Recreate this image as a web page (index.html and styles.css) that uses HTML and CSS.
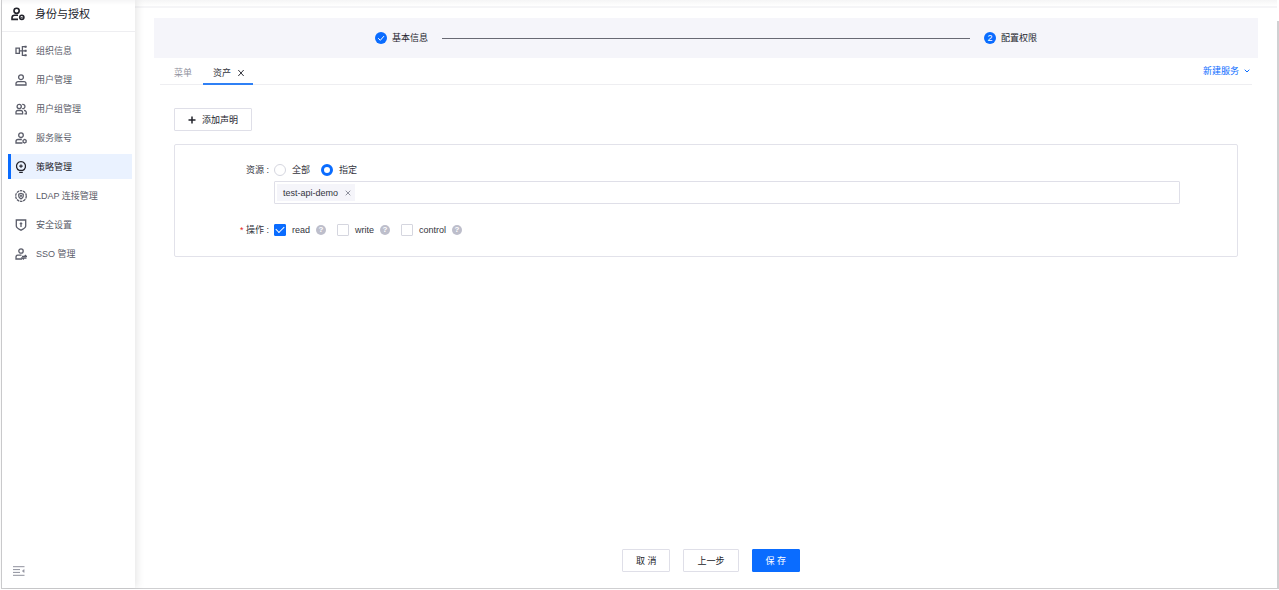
FILE: index.html
```html
<!DOCTYPE html>
<html lang="zh-CN">
<head>
<meta charset="utf-8">
<title>身份与授权</title>
<link rel="stylesheet" href="styles.css">
</head>
<body>
<div class="app">
  <aside class="sidebar">
    <h1 class="sidebar-title">
      <svg class="title-icon" viewBox="0 0 14 14"><circle cx="5.600" cy="3.800" r="2.600"/><path d="M7 8.200H3.600A2.600 2.600 0 0 0 1 10.800v1.600h6"/><circle cx="10.800" cy="10.300" r="2.100"/><path d="M9.800 10.200l.8.8 1.400-1.500" stroke-width="1"/></svg>
      身份与授权
    </h1>
    <nav class="menu">
      <a class="menu-item" href="#"><svg class="icon" viewBox="0 0 12 12"><path d="M1 3.200h3.400v5.200H1zM4.400 5.800h3M11.500 1.700H7.400v8.600h4.100M7.400 5.800h4.100"/><path d="M9.600 1.700h1.900M9.600 5.800h1.900M9.600 10.300h1.900" stroke-width="2"/></svg>组织信息</a>
      <a class="menu-item" href="#"><svg class="icon" viewBox="0 0 12 12"><circle cx="6" cy="3.200" r="2.400"/><path d="M1 11V9.600a2 2 0 0 1 2-2h6a2 2 0 0 1 2 2V11z"/></svg>用户管理</a>
      <a class="menu-item" href="#"><svg class="icon" viewBox="0 0 12 12"><circle cx="4.200" cy="3.500" r="2.100"/><path d="M7.200 1.500a2.100 2.100 0 1 1 0 4M1 10.800V9.200a1.700 1.700 0 0 1 1.700-1.700h3.200a1.700 1.700 0 0 1 1.700 1.700v1.600zM9 7.500a2 2 0 0 1 2.300 2v1.300H9.500"/></svg>用户组管理</a>
      <a class="menu-item" href="#"><svg class="icon" viewBox="0 0 12 12"><circle cx="6" cy="3.200" r="2.300"/><path d="M6.800 7.500H3a2 2 0 0 0-2 2V11h6.400"/><path d="M9.600 7.400l1.500.9v1.900l-1.500.9-1.500-.9V8.300z"/></svg>服务账号</a>
      <a class="menu-item active" href="#" aria-current="page"><svg class="icon" viewBox="0 0 12 12"><path d="M4.200 9.300a4.500 4.500 0 1 1 3.600 0zM4.200 11.300h3.600"/><path d="M6 3.200l.6 1.300 1.400.6-1.400.6L6 7l-.6-1.300L4 5.100l1.400-.6z" fill="currentColor" stroke-width=".3"/></svg>策略管理</a>
      <a class="menu-item" href="#"><svg class="icon" viewBox="0 0 12 12"><circle cx="6" cy="6" r="5.300" stroke-dasharray="2.600 .7"/><path d="M3.800 4.200L6 3.400l2.200.8v2.100C8.200 7.500 7.100 8.300 6 8.800 4.900 8.300 3.800 7.500 3.800 6.300z"/><circle cx="6" cy="5.900" r=".4"/></svg>LDAP 连接管理</a>
      <a class="menu-item" href="#"><svg class="icon" viewBox="0 0 12 12"><path d="M1.300 1h9.400v6c0 2-2.200 3-4.700 4.200C3.500 10 1.300 9 1.300 7zM6 8V4.500"/><path d="M4.700 5h2.600L6 3.200z" fill="currentColor" stroke-width=".4"/></svg>安全设置</a>
      <a class="menu-item" href="#"><svg class="icon" viewBox="0 0 12 12"><circle cx="6" cy="3" r="2.200"/><path d="M6.500 7.200H3a2 2 0 0 0-2 2V11h6M7 8.400h4.500L9.800 6.900M11.500 10H7.300l1.500 1.400"/></svg>SSO 管理</a>
    </nav>
    <button class="collapse" type="button" aria-label="收起菜单"><svg viewBox="0 0 12 10"><path d="M0 .700h11.500M0 3.600h7M0 6.400h7M0 9.300h11.500"/><path d="M11.200 3.400v3.200L9.200 5z" fill="currentColor" stroke-width=".4"/></svg></button>
  </aside>

  <main class="content">
    <div class="topline"></div>
    <div class="page">
      <ol class="steps">
        <li class="step"><span class="step-dot"><svg viewBox="0 0 12 12"><path d="M3.200 6.200l2.100 2.100 3.700-4.200"/></svg></span>基本信息</li>
        <li class="step-line" role="presentation"></li>
        <li class="step"><span class="step-dot">2</span>配置权限</li>
      </ol>

      <div class="tabs">
        <a class="tab" href="#">菜单</a>
        <a class="tab selected" href="#">资产<svg class="tab-close" viewBox="0 0 8 8"><path d="M1.300 1l5.400 6M6.700 1L1.300 7"/></svg></a>
        <button class="new-service" type="button">新建服务<svg viewBox="0 0 6 6"><path d="M.700 1.700L3 4l2.300-2.300"/></svg></button>
      </div>

      <div class="body">
        <button class="btn add" type="button"><svg viewBox="0 0 8 8"><path d="M4 .500v7M.500 4h7"/></svg>添加声明</button>

        <form class="card">
          <div class="row">
            <span class="label" id="res">资源</span>
            <div class="field" role="radiogroup" aria-labelledby="res">
              <div class="options">
                <label class="option"><input class="radio" type="radio" name="scope">全部</label>
                <label class="option"><input class="radio" type="radio" name="scope" checked>指定</label>
              </div>
              <div class="tag-box">
                <span class="tag">test-api-demo<button class="tag-close" type="button" aria-label="移除"><svg viewBox="0 0 6 6"><path d="M.700.700l4.600 4.600M5.300.700L.700 5.300"/></svg></button></span>
                <input class="tag-input" type="text" aria-label="资源">
              </div>
            </div>
          </div>
          <div class="row">
            <span class="label required" id="ops">操作</span>
            <div class="options checks" role="group" aria-labelledby="ops">
              <span class="check-item"><label class="option"><input class="check" type="checkbox" checked>read</label><span class="help">?</span></span>
              <span class="check-item"><label class="option"><input class="check" type="checkbox">write</label><span class="help">?</span></span>
              <span class="check-item"><label class="option"><input class="check" type="checkbox">control</label><span class="help">?</span></span>
            </div>
          </div>
        </form>
      </div>

      <footer class="actions">
        <button class="btn" type="button">取 消</button>
        <button class="btn" type="button">上一步</button>
        <button class="btn primary" type="button">保 存</button>
      </footer>
    </div>
  </main>
  <div class="scrollbar"></div>
</div>
</body>
</html>
```
FILE: styles.css
```css
* {
  box-sizing: border-box;
}

body {
  margin: 0;
  color: #33343d;
  font: 9px/14px "Liberation Sans", "Noto Sans CJK SC", sans-serif;
  background: #fff;
}

svg {
  flex: none;
  fill: none;
  stroke: currentColor;
}

button,
input {
  margin: 0;
  font: inherit;
  color: inherit;
}

a {
  color: inherit;
  text-decoration: none;
}

.app {
  display: flex;
  height: calc(100vh - 1px);
  margin-left: 1px;
  border-left: 1px solid #cfcfd1;
  border-bottom: 1px solid #cfcfd1;
}

.sidebar {
  z-index: 1;
  display: flex;
  flex: none;
  flex-direction: column;
  width: 133px;
  background: #fff;
  box-shadow: 2px 0 8px rgba(0, 0, 0, 0.1);
}

.sidebar-title {
  display: flex;
  align-items: center;
  gap: 10px;
  height: 32px;
  margin: 0 0 6px;
  padding: 0 9px 3px;
  border-bottom: 1px solid #eeeef1;
  color: #22232b;
  font-size: 11px;
  font-weight: 400;
  background: linear-gradient(#f5f5f6, #fff 5px);
}

.title-icon {
  width: 14px;
  height: 14px;
  stroke-width: 1.6;
}

.menu {
  display: flex;
  flex-direction: column;
  gap: 4px;
  padding: 0 3px 0 6px;
}

.menu-item {
  display: flex;
  align-items: center;
  gap: 9px;
  height: 25px;
  padding-left: 4px;
  border-left: 3px solid transparent;
  color: #5a5c69;
}

.icon {
  width: 12px;
  height: 12px;
  stroke-width: 1.3;
}

.menu-item.active {
  border-color: #0a6cff;
  color: #22232b;
  background: #eaf2ff;
}

.collapse {
  display: flex;
  margin: auto auto 12px 11px;
  padding: 0;
  border: 0;
  color: #8f919d;
  background: none;
}

.collapse svg {
  width: 12px;
  height: 10px;
}

.content {
  display: flex;
  flex: 1;
  flex-direction: column;
  min-width: 0;
}

.topline {
  height: 8px;
  border-bottom: 2px solid #f5f5f7;
  background: linear-gradient(#f5f5f6, #fff 6px);
}

.page {
  display: flex;
  flex: 1;
  flex-direction: column;
  padding: 10px 19px 16px;
}

.steps {
  display: flex;
  align-items: center;
  gap: 14px;
  height: 40px;
  margin: 0;
  padding: 0 221px;
  list-style: none;
  background: #f5f5fa;
}

.step {
  display: flex;
  align-items: center;
  gap: 5px;
  color: #22232b;
}

.step-dot {
  display: flex;
  align-items: center;
  justify-content: center;
  width: 12px;
  height: 12px;
  border-radius: 50%;
  color: #fff;
  background: #0a6cff;
}

.step-dot svg {
  width: 12px;
  height: 12px;
}

.step-line {
  flex: 1;
  height: 1px;
  background: #686973;
}

.tabs {
  display: flex;
  height: 27px;
  margin: 0 6px;
  padding-left: 4px;
  border-bottom: 1px solid #eeeef1;
}

.tab {
  display: flex;
  align-items: center;
  gap: 6px;
  height: 27px;
  padding: 4px 10px 0;
  border-bottom: 2px solid transparent;
  color: #8f919d;
}

.tab.selected {
  margin-left: 1px;
  padding-right: 8px;
  border-color: #2f80f5;
  color: #33343d;
}

.tab-close {
  width: 8px;
  height: 8px;
}

.new-service {
  display: flex;
  align-items: center;
  gap: 5px;
  margin-left: auto;
  padding: 0 2px 0 0;
  border: 0;
  color: #0a6cff;
  background: none;
}

.new-service svg {
  width: 6px;
  height: 6px;
}

.body {
  padding: 23px 20px;
}

.btn {
  display: inline-flex;
  align-items: center;
  justify-content: center;
  height: 23px;
  padding: 0 13px;
  border: 1px solid #dfdfe8;
  border-radius: 1px;
  color: #22232b;
  background: #fff;
}

.btn.primary {
  border-color: #0a6cff;
  color: #fff;
  background: #0a6cff;
}

.add {
  gap: 6px;
}

.add svg {
  width: 8px;
  height: 8px;
  stroke-width: 1.5;
}

.card {
  display: flex;
  flex-direction: column;
  gap: 18px;
  margin-top: 13px;
  padding: 17px 57px 18px 64px;
  border: 1px solid #e2e2ea;
  border-radius: 2px;
}

.row {
  display: flex;
}

.label {
  flex: none;
  width: 35px;
  padding-right: 5px;
  line-height: 16px;
  text-align: right;
  white-space: nowrap;
}

.label::after {
  content: " :";
}

.required::before {
  color: #e62222;
  content: "* ";
}

.field {
  flex: 1;
}

.options {
  display: flex;
  gap: 11px;
}

.option,
.check-item {
  display: flex;
  align-items: center;
  gap: 6px;
  height: 16px;
}

.radio,
.check {
  width: 12px;
  height: 12px;
  border: 1px solid #d5d6df;
  background: #fff;
  appearance: none;
}

.radio {
  border-radius: 50%;
}

.radio:checked {
  border: 3px solid #0a6cff;
}

.check {
  display: flex;
  align-items: center;
  justify-content: center;
  border-radius: 1px;
}

.check:checked {
  border-color: #0a6cff;
  background: #0a6cff;
}

.check:checked::after {
  flex: none;
  width: 7px;
  height: 4px;
  margin-bottom: 3px;
  border: solid #fff;
  border-width: 0 0 1px 1px;
  content: "";
  transform: rotate(-45deg);
}

.help {
  width: 10px;
  height: 10px;
  border-radius: 50%;
  color: #fff;
  font-size: 8px;
  font-weight: 700;
  line-height: 10px;
  text-align: center;
  background: #bdbecb;
}

.tag-box {
  display: flex;
  margin-top: 3px;
  padding: 2px;
  border: 1px solid #dfdfe8;
  border-radius: 1px;
}

.tag {
  display: flex;
  align-items: center;
  gap: 7px;
  height: 17px;
  padding: 0 4px 0 6px;
  background: #f5f5fa;
}

.tag-close {
  display: flex;
  padding: 0;
  border: 0;
  color: #8f919d;
  background: none;
}

.tag-close svg {
  width: 6px;
  height: 6px;
}

.tag-input {
  flex: 1;
  min-width: 0;
  height: 17px;
  padding: 0 4px;
  border: 0;
  outline: 0;
  background: none;
}

.actions {
  display: flex;
  justify-content: center;
  gap: 13px;
  margin-top: auto;
  padding-left: 10px;
}

.scrollbar {
  flex: none;
  width: 2px;
  margin-top: 21px;
  background: #d0d0d2;
}
```
